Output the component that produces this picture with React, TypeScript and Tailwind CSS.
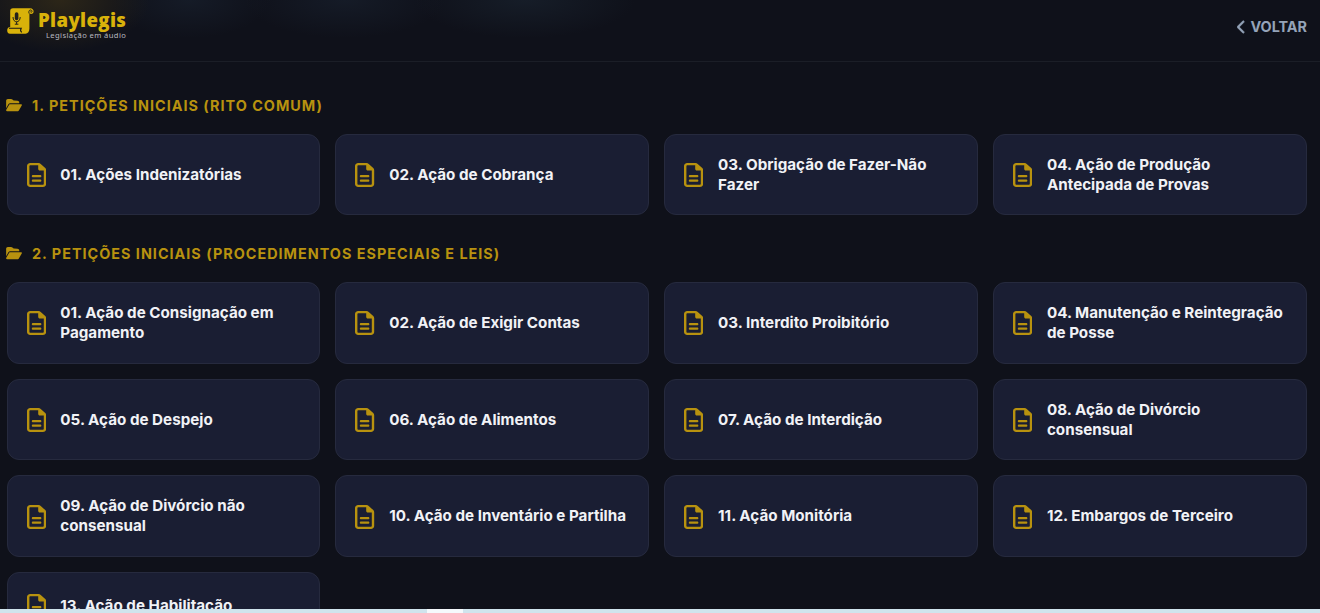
import { FaChevronLeft, FaFolderOpen, FaRegFileLines } from "react-icons/fa6";

interface Section {
  title: string;
  items: string[];
}

const sections: Section[] = [
  {
    title: "1. Petições Iniciais (Rito Comum)",
    items: [
      "01. Ações Indenizatórias",
      "02. Ação de Cobrança",
      "03. Obrigação de Fazer-Não Fazer",
      "04. Ação de Produção Antecipada de Provas",
    ],
  },
  {
    title: "2. Petições Iniciais (Procedimentos Especiais e Leis)",
    items: [
      "01. Ação de Consignação em Pagamento",
      "02. Ação de Exigir Contas",
      "03. Interdito Proibitório",
      "04. Manutenção e Reintegração de Posse",
      "05. Ação de Despejo",
      "06. Ação de Alimentos",
      "07. Ação de Interdição",
      "08. Ação de Divórcio consensual",
      "09. Ação de Divórcio não consensual",
      "10. Ação de Inventário e Partilha",
      "11. Ação Monitória",
      "12. Embargos de Terceiro",
      "13. Ação de Habilitação",
    ],
  },
];

function Logo() {
  return (
    <div className="flex items-start">
      <svg width="27" height="28" viewBox="0 0 27 28" className="mt-px">
        <path
          d="M6 .3H23C25.7 .3 26.8 2.2 26.6 4C26.3 6.2 23.2 6.6 22.4 5V20.5C22.4 23.5 21 25.7 18.5 25.7H3C1 25.7 .2 24.3 .2 22.5C.2 20.3 1.3 19 3 19H3.2V3.2C3.2 1.2 4.2 .3 6 .3Z"
          fill="#d9b20a"
        />
        <path d="M2 20.3H14.2C13.3 21.8 13.5 23.4 14.8 24.4" fill="none" stroke="#171719" strokeWidth="1.1" />
        <path d="M21.9 5.4V3.4C22.3 1.4 25.2 1.6 25 3.5C24.8 4.6 23.6 4.5 23.4 3.6" fill="none" stroke="#29251a" strokeWidth="1" />
        <rect x="7.8" y="4.2" width="3.6" height="8" rx="1.8" fill="#24211b" />
        <path d="M6 9C6 15.4 13.2 15.4 13.2 9M9.6 13.8V16.2M7.8 16.2H11.4" fill="none" stroke="#24211b" strokeWidth="1" />
      </svg>
      <div className="ml-[3px] flex flex-col items-end">
        <span className="mt-px pl-px font-['Open_Sans',sans-serif] text-[18.6px] leading-[24px] font-extrabold tracking-[0.35px] text-[#d9b20a]">
          Playlegis
        </span>
        <span className="-mt-px font-['Noto_Sans',sans-serif] text-[7.6px] leading-[8px] tracking-[0.4px] text-[#b9bac0]">
          Legislação em áudio
        </span>
      </div>
    </div>
  );
}

function Card({ label }: { label: string }) {
  return (
    <a
      href="#"
      className="flex items-center gap-[15px] rounded-[12px] border border-[#262a3e] bg-[#1a1e33] py-5 pr-[18px] pl-[19px] text-[#f1f2f6]"
    >
      <FaRegFileLines preserveAspectRatio="none" className="mt-px h-[24px] w-[19.2px] shrink-0 text-[#b8920f]" />
      <span className="-ml-[0.4px] text-[15.2px] leading-[19.8px] font-bold">{label}</span>
    </a>
  );
}

export default function App() {
  return (
    <div className="relative h-[613px] overflow-hidden bg-[#0f111a] font-['Inter',sans-serif]">
      <header className="flex h-[62px] items-start justify-between border-b border-[#1b1e27] bg-[radial-gradient(ellipse_90px_52px_at_60px_0px,#2c2618,transparent),radial-gradient(ellipse_80px_38px_at_190px_0px,#151b27,transparent),radial-gradient(ellipse_100px_38px_at_345px_0px,#151b27,transparent),radial-gradient(ellipse_110px_38px_at_525px_0px,#161d28,transparent)] pt-[7px] pr-[13px] pl-[7px]">
        <Logo />
        <a href="#" className="mt-[9px] flex items-center gap-[4px] text-[14.4px] leading-[22px] font-bold text-[#94a3b8]">
          <FaChevronLeft strokeWidth="30" stroke="currentColor" className="h-[14px] w-[9px]" />
          VOLTAR
        </a>
      </header>

      <main className="pt-[33px] pr-[13px] pl-[6.5px]">
        {sections.map((section) => (
          <section key={section.title} className="mb-[27.8px]">
            <h2 className="mb-[16.9px] -ml-[0.5px] flex h-[22px] items-center gap-[10px] text-[14.4px] font-bold tracking-[1px] text-[#b8920f] uppercase">
              <FaFolderOpen className="mb-[3px] h-[14px] w-[16px]" />
              {section.title}
            </h2>
            <div className="grid grid-cols-4 gap-[15px]">
              {section.items.map((item) => (
                <Card key={item} label={item} />
              ))}
            </div>
          </section>
        ))}
      </main>

      <div className="absolute bottom-0 left-0 flex h-1 w-full bg-[#d0e4ed]">
        <div className="ml-[427px] w-9 bg-[#f5f9fc]" />
      </div>
    </div>
  );
}
